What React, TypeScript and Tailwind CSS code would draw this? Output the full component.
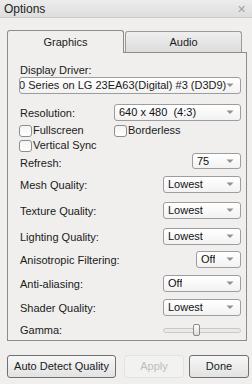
import React from "react";

const font = { fontFamily: '"Liberation Sans", Arial, sans-serif' };

function Arrow() {
  return (
    <svg width="8" height="5" viewBox="0 0 8 5" className="shrink-0">
      <path d="M0.5 0.5 L4 4 L7.5 0.5 Z" fill="#919191" />
    </svg>
  );
}

function Select({ value, className = "" }: { value: string; className?: string }) {
  return (
    <div
      className={`flex h-full items-center justify-between overflow-hidden rounded-[3px] border border-[#9d9d9d] bg-gradient-to-b from-white to-[#f2f2f2] pl-[4px] pr-[6px] text-[11px] leading-[13px] text-[#111] ${className}`}
    >
      <span className="truncate whitespace-pre">{value}</span>
      <Arrow />
    </div>
  );
}

function Check({ label, className = "" }: { label: string; className?: string }) {
  return (
    <div className={`flex h-[13px] items-center gap-[1px] text-[11px] leading-[13px] ${className}`}>
      <span className="h-[12px] w-[13px] shrink-0 rounded-[3px] border border-[#8e8e8e] bg-gradient-to-b from-[#f4f4f4] to-white" />
      <span>{label}</span>
    </div>
  );
}

function Row({
  label,
  value,
  width = "w-[78px]",
  className = "",
}: {
  label: string;
  value: string;
  width?: string;
  className?: string;
}) {
  return (
    <div className={`flex h-[17px] items-center justify-between pl-[1px] ${className}`}>
      <span className="pt-[2px] text-[11px] leading-[13px]">{label}</span>
      <Select value={value} className={width} />
    </div>
  );
}

export default function App() {
  return (
    <div className="h-[384px] w-[252px] overflow-hidden bg-[#f0efed] text-[#1a1a1a]" style={font}>
      {/* title bar */}
      <div className="flex h-[18px] items-center justify-between border-b border-[#c9c9c9] bg-gradient-to-b from-[#ececec] to-[#dedede] pl-[4px] pr-[6px]">
        <span className="text-[12px] leading-[14px] text-[#222]">Options</span>
        <span className="text-[11px] leading-[12px] text-[#a3a3a3]">✕</span>
      </div>

      <div className="pl-[7px] pr-[5px] pt-[12px]">
        {/* tabs */}
        <div className="relative z-10 flex items-end">
          <div className="-mb-px flex h-[23px] w-[117px] items-center justify-center rounded-t-[3px] border border-b-0 border-[#8c8c8c] bg-[#f0efed] text-[11px]">
            Graphics
          </div>
          <div className="ml-px flex h-[21px] w-[117px] items-center justify-center rounded-t-[3px] border border-b-0 border-[#9a9a9a] bg-gradient-to-b from-[#efefef] to-[#dcdcdc] text-[11px]">
            Audio
          </div>
        </div>

        {/* panel */}
        <div className="h-[289px] border border-[#8c8c8c] pl-[11px] pr-[5px] pt-[11px]">
          <div className="pl-[1px] text-[11px] leading-[13px]">Display Driver:</div>
          <div className="flex h-[17px] items-center overflow-hidden rounded-[3px] border border-[#9d9d9d] bg-gradient-to-b from-white to-[#f2f2f2] pr-[6px] text-[11px] leading-[13px]">
            <span className="-ml-[1px] flex-1 whitespace-nowrap">0 Series on LG 23EA63(Digital) #3 (D3D9)</span>
            <Arrow />
          </div>

          <Row label="Resolution:" value="640 x 480  (4:3)" width="w-[127px]" className="mt-[10px]" />

          <div className="mt-[3px] flex">
            <Check label="Fullscreen" className="w-[95px]" />
            <Check label="Borderless" />
          </div>
          <Check label="Vertical Sync" className="mt-[2px]" />

          <div className="mt-[1px] flex h-[16px] items-center justify-between pl-[1px]">
            <span className="pt-[4px] text-[11px] leading-[13px]">Refresh:</span>
            <Select value="75" className="w-[49px]" />
          </div>

          <Row label="Mesh Quality:" value="Lowest" className="mt-[7px]" />
          <Row label="Texture Quality:" value="Lowest" className="mt-[9px]" />
          <Row label="Lighting Quality:" value="Lowest" className="mt-[9px]" />
          <Row label="Anisotropic Filtering:" value="Off" width="w-[45px]" className="mt-[6px]" />
          <Row label="Anti-aliasing:" value="Off" className="mt-[7px]" />
          <Row label="Shader Quality:" value="Lowest" className="mt-[7px]" />

          <div className="mt-[8px] flex h-[12px] items-center justify-between pl-[1px]">
            <span className="text-[11px] leading-[13px]">Gamma:</span>
            <div className="relative flex h-[12px] w-[78px] items-center">
              <div className="h-[5px] w-full rounded-full border border-[#c8c8c8] bg-[#e9e9e9]" />
              <div className="absolute left-[30px] top-0 h-[12px] w-[7px] rounded-[2px] border border-[#8a8a8a] bg-gradient-to-b from-white to-[#dcdcdc]" />
            </div>
          </div>
        </div>

        {/* buttons */}
        <div className="-mr-[2px] mt-[14px] flex text-[11px]">
          <div className="flex h-[23px] w-[109px] items-center justify-center rounded-[3px] border border-[#707070] bg-gradient-to-b from-[#f7f7f7] to-[#e2e2e2]">
            Auto Detect Quality
          </div>
          <div className="ml-[8px] flex h-[23px] w-[60px] items-center justify-center rounded-[3px] border border-[#e2e2e2] bg-[#f2f2f0] text-[#bdbdbd]">
            Apply
          </div>
          <div className="ml-[5px] flex h-[23px] w-[60px] items-center justify-center rounded-[3px] border border-[#707070] bg-gradient-to-b from-[#f7f7f7] to-[#e2e2e2]">
            Done
          </div>
        </div>
      </div>
    </div>
  );
}
